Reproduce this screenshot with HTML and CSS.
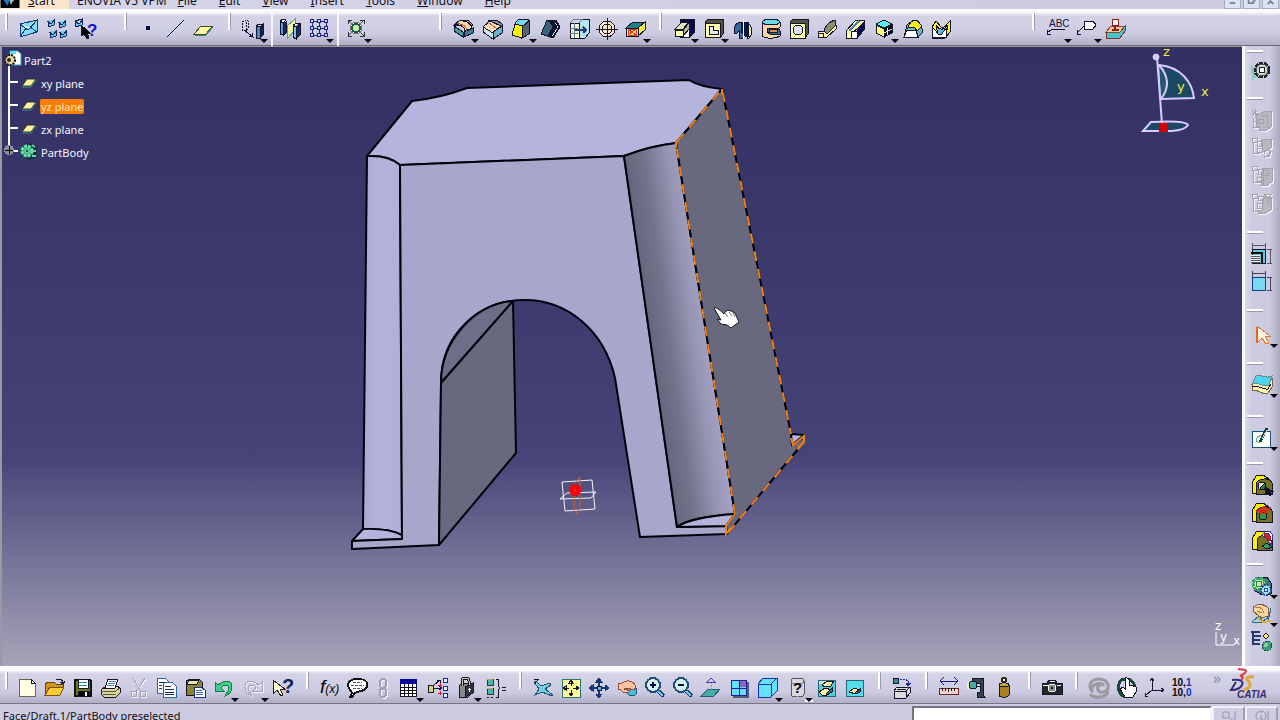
FILE: index.html
```html
<!DOCTYPE html>
<html lang="en">
<head>
<meta charset="utf-8">
<title>Part2</title>
<link rel="stylesheet" href="styles.css">
</head>
<body>
<header class="menubar">
  <nav class="menus">
    <svg class="app-mark" viewBox="0 0 19 8" aria-hidden="true"><path fill="#03040c" d="M0 0h19v8H0z"/><path fill="#2676b8" d="M3 0l4 6 2-6z"/><path fill="#e89b3c" d="M9 0l1 4 4-4z"/><path fill="#7cc8ee" d="M9 0l2 5 1-5z"/></svg>
    <button class="menu start"><u>S</u>tart</button>
    <button class="menu wide">ENOVIA V5 VPM</button>
    <button class="menu"><u>F</u>ile</button>
    <button class="menu"><u>E</u>dit</button>
    <button class="menu"><u>V</u>iew</button>
    <button class="menu"><u>I</u>nsert</button>
    <button class="menu"><u>T</u>ools</button>
    <button class="menu"><u>W</u>indow</button>
    <button class="menu"><u>H</u>elp</button>
  </nav>
  <div class="window-buttons">
    <button aria-label="Minimize"><svg viewBox="0 0 16 8"><path d="M5 3h6"/></svg></button>
    <button aria-label="Restore"><svg viewBox="0 0 16 8"><path d="M5 0v3h5V0M12 0v1"/></svg></button>
    <button aria-label="Close"><svg viewBox="0 0 16 8"><path d="M5 4l3-3 3 3"/></svg></button>
  </div>
</header>

<div class="toolbar top" role="toolbar">
  <div class="group g-view">
    <button class="tool" aria-label="Send"><svg class="i" viewBox="0 0 24 24"><path fill="#7fe0f8" stroke="#1b3a78" d="M3 7l17-4v12L3 20z"/><path stroke="#1b3a78" d="M3 7l8 6 9-10M3 20l6-9M20 15l-7-5"/><path stroke="#e4fbff" d="M5 7l6 4 6-6"/></svg></button>
    <button class="tool" aria-label="Send all"><svg class="i" viewBox="0 0 24 24"><g fill="#69cdf0" stroke="#14245e"><path d="M3 5l6-2v5l-6 2zM14 6l6-2v5l-6 2zM5 16l6-2v5l-6 2zM15 16l6-2v5l-6 2z"/><path d="M2 4l4 3 4-5M13 5l4 3 4-5M4 15l4 3 4-5M14 15l4 3 4-5"/></g></svg></button>
    <button class="tool" aria-label="What is this"><svg class="i" viewBox="0 0 24 24"><path fill="#69cdf0" stroke="#14245e" d="M2 4l7-2v6l-7 2zl4 3 4-5"/><path fill="#000" d="M8 8v11l3-2 3 5 2-1-2-5h3z"/><text class="q" x="14" y="19">?</text></svg></button>
  </div>
  <div class="group g-ref">
    <button class="tool" aria-label="Point"><svg class="i" viewBox="0 0 24 24"><path fill="#050845" stroke="none" d="M10 9h4v4h-4z"/></svg></button>
    <button class="tool" aria-label="Line"><svg class="i" viewBox="0 0 24 24"><path stroke="#001040" d="M3 20L20 3"/></svg></button>
    <button class="tool" aria-label="Plane"><svg class="i" viewBox="0 0 24 24"><path fill="#fffaa0" stroke="#47471e" d="M2 17h12l7-8H9z"/><path stroke="#2a8a80" d="M3 18h11l7-8"/></svg></button>
  </div>
  <div class="group g-pattern">
    <button class="tool more" aria-label="Translate"><svg class="i" viewBox="0 0 24 24"><path stroke-dasharray="2 1" d="M1 5l3-2 3 1v8l-2 2-4-1zM5 5v9"/><path d="M4 14l7 5M8 19l4 1-1-4"/><path fill="#438ac4" d="M15 10v11h4V9z"/><path fill="#122156" d="M19 9l3-2v11l-3 3z"/><path fill="#c5eaff" d="M15 9l3-2h4l-3 3z"/></svg></button>
    <span class="rule"></span>
    <button class="tool" aria-label="Mirror"><svg class="i" viewBox="0 0 24 24"><path fill="#55a4d6" d="M2 5l3 1v12l-3-1z"/><path fill="#192c65" d="M5 6l3-1v11l-3 2z"/><path fill="#fbf7a4" stroke="#52a38e" d="M9 9l8-7v11l-8 9z"/><path fill="#79c8ec" d="M15 9l3 1v12l-3-2z"/><path fill="#192c65" d="M18 10l4-3v11l-4 4z"/><path fill="#fff" d="M2 4l3-2 3 1-3 3zM15 8l4-2 3 1-4 3z"/></svg></button>
    <button class="tool more" aria-label="Rectangular pattern"><svg class="i" viewBox="0 0 24 24"><g stroke="#23237d"><path d="M5 2v18M12 2v18M19 2v18M3 4h18M3 11h18M3 18h18"/><g fill="#aee1f0"><circle cx="5" cy="4" r="2"/><circle cx="12" cy="4" r="2"/><circle cx="19" cy="4" r="2"/><circle cx="5" cy="11" r="2"/><circle cx="12" cy="11" r="2"/><circle cx="19" cy="11" r="2"/><circle cx="5" cy="18" r="2"/><circle cx="12" cy="18" r="2"/><circle cx="19" cy="18" r="2"/></g></g></svg></button>
    <span class="rule"></span>
    <button class="tool more" aria-label="Scaling"><svg class="i" viewBox="0 0 24 24"><path stroke="#333" d="M3 3l16 16M19 3L3 19M3 7V3h4M15 3h4v4M19 15v4h-4M7 19H3v-4"/><circle cx="11" cy="11" r="6" fill="#f8f8e8" stroke="#777"/><circle cx="11" cy="11" r="4" fill="#c8f09a" stroke="#16564d" stroke-width="2"/></svg></button>
  </div>
  <div class="group g-dress">
    <button class="tool more" aria-label="Edge fillet"><svg class="i" viewBox="0 0 24 24"><path fill="#a0a1a5" d="M2 8l6-5h8l5 5-6 2z"/><path fill="#439ba5" d="M2 9l9 6v5l-9-6z"/><path fill="#f8d6ab" d="M2 8l5-4c6-1 12 2 13 7l-7 3C12 9 8 7 2 8z"/><path fill="#397f93" d="M12 15l9-4v5l-9 4z"/><path stroke="#af5c37" d="M5 7c6-1 9 3 10 7"/></svg></button>
    <button class="tool" aria-label="Chamfer"><svg class="i" viewBox="0 0 24 24"><path fill="#87898d" d="M8 3h8l5 4v5l-9 8-8-7z"/><path fill="#fadbb0" d="M2 10l7-6 11 5-8 7z"/><path fill="#6bb5cc" d="M12 15l9-6v7l-9 6z"/><path fill="#cfe5ed" d="M2 10l10 6v6L2 15z"/><path stroke="#ad633c" d="M7 5l9 7"/></svg></button>
    <button class="tool more" aria-label="Draft"><svg class="i" viewBox="0 0 24 24"><path fill="#fff200" d="M5 7l8 1-1 13-10-3z"/><path fill="#54636c" d="M13 9l6-5v13l-7 4z"/><path fill="#71ddeb" d="M5 6l4-4 10 1-6 6-8-2z"/></svg></button>
    <button class="tool" aria-label="Shell"><svg class="i" viewBox="0 0 24 24"><path fill="#33647c" d="M2 17L8 3h9l4 7-7 11z"/><path fill="#eef8fb" d="M9 4h7l4 6-6 10-3-1 5-9-3-5z"/><path fill="#091431" d="M11 5h4l3 5-6 9H9l5-9z"/></svg></button>
    <button class="tool" aria-label="Thickness"><svg class="i" viewBox="0 0 24 24"><path fill="#afe8f2" d="M12 6l4-4h6v14l-4 5h-6z"/><path fill="#f2f6d7" d="M3 6h9v15H3z"/><path stroke="#5f7d94" d="M3 6l4-4h9M12 6l4-4M7 6v15M3 11h8M3 16h8"/><path stroke="#27396e" stroke-width="2" d="M8 13h11M16 10l3 3-3 3"/></svg></button>
    <button class="tool" aria-label="Thread"><svg class="i" viewBox="0 0 24 24"><circle cx="12" cy="12" r="8" fill="#ffeccd"/><circle cx="12" cy="12" r="5"/><path d="M12 1v22M1 12h22"/></svg></button>
    <button class="tool more" aria-label="Replace face"><svg class="i" viewBox="0 0 24 24"><path fill="#17878a" d="M2 11l7-6h12l-7 6z"/><path fill="#ffec67" d="M2 11h12v8H2z"/><path fill="#f2f24a" d="M14 11l7-6v8l-7 6z"/><path stroke="#dc381c" d="M4 12h8v6H4zl8 6M12 12l-8 6"/></svg></button>
  </div>
  <div class="group g-sketch">
    <button class="tool more" aria-label="Pad"><svg class="i" viewBox="0 0 24 24"><path fill="#05084b" d="M8 2h14v14l-4 4H8z"/><path fill="#fff" d="M8 5h9v15H8z"/><path fill="#ffffac" d="M3 13h8v6H3z"/><path fill="#e6e6b5" d="M3 12l7-7h7l-6 7z"/><path fill="#b9b98d" d="M11 13l6-7v6l-6 7z"/></svg></button>
    <button class="tool more" aria-label="Pocket"><svg class="i" viewBox="0 0 24 24"><path fill="#55543d" d="M3 5l3-3h15v15l-3 4z"/><path fill="#ffffac" d="M3 6h15v14H3z"/><path fill="#e9e9e6" d="M7 9h4v4h5v4H7z"/></svg></button>
    <button class="tool" aria-label="Shaft"><svg class="i" viewBox="0 0 24 24"><path fill="#356b9b" d="M3 13c0-6 4-8 9-8v16H8v-7l-3 3-2-1z"/><path fill="#f5f0a3" d="M16 6c5 2 5 6 5 11l-3 4h-2z"/><path fill="#071346" d="M10 5h7v14h-3l-4-4z"/><path stroke="#fff" d="M12 2v20"/></svg></button>
    <button class="tool" aria-label="Groove"><svg class="i" viewBox="0 0 24 24"><path fill="#fbd6a4" d="M3 5h18v5l-2 2 2 2v5c-5 3-14 3-18 0z"/><path fill="#63ddec" d="M3 5c2-4 16-4 18 0-2 4-16 4-18 0z"/><path fill="#31739b" d="M8 11h11l2 3v3H11l-3-2z"/><path fill="#e88d57" d="M10 12h8v3h-8z"/></svg></button>
    <button class="tool" aria-label="Hole"><svg class="i" viewBox="0 0 24 24"><path fill="#55543d" d="M3 5l3-3h15v15l-3 4z"/><path fill="#ffffac" d="M3 6h15v15H3z"/><circle cx="11" cy="13" r="5" fill="#d9e1ed"/></svg></button>
    <button class="tool" aria-label="Rib"><svg class="i" viewBox="0 0 24 24"><path fill="#fbf4a0" d="M3 20v-6h6L19 4l2 4v4l-9 8z"/><path fill="#8d8f6b" d="M9 14c1-6 7-10 11-11l1 5-9 9z"/><path fill="#fbf4a0" d="M3 16h6l-1 4H3z"/></svg></button>
    <button class="tool" aria-label="Slot"><svg class="i" viewBox="0 0 24 24"><path fill="#ffffad" d="M3 14L13 3h8v3L9 16v5H3z"/><path fill="#060b4d" d="M14 13l7-8v8l-7 8z"/><path fill="#fff" d="M8 14h6v7H8z"/><path stroke="#4182b1" stroke-width="2" d="M6 14L16 4"/></svg></button>
    <button class="tool more" aria-label="Multi-section solid"><svg class="i" viewBox="0 0 24 24"><path fill="#59eeee" d="M4 7l8-4 8 4-8 4z"/><path fill="#ffff72" d="M4 8l8 4v8l-8-4z"/><path fill="#050b13" d="M12 12l8-4v8l-8 4z"/><path stroke="#eee" d="M15 11v7M12 16l8-4"/></svg></button>
    <button class="tool" aria-label="Loft"><svg class="i" viewBox="0 0 24 24"><path fill="#69bac0" d="M3 20l3-12 5-4h5l5 8v4l-4 4z"/><path fill="#fff" d="M3 20l3-7h9l2 7z"/><path fill="#fff21b" d="M7 11c1-4 4-8 7-8 4 0 4 4 7 6l-5 5c-3-6-5-3-9-3z"/></svg></button>
    <button class="tool" aria-label="Removed loft"><svg class="i" viewBox="0 0 24 24"><path fill="#ffec22" d="M3 10l4-6 5 6h3l6-6v11l-5 6H3z"/><path fill="#57bddc" d="M7 8c3 5 8 6 11 0l1 4-5 6H9z"/><path fill="#fff" d="M3 11c4 0 5 7 8 7s3-5 6-6v8H3z"/></svg></button>
  </div>
  <div class="group g-annotate">
    <button class="tool more" aria-label="Text with leader"><svg class="i" viewBox="0 0 24 24"><text class="abc" x="4" y="10">ABC</text><path d="M20 12H7l-5 4M2 13v4h4"/></svg></button>
    <button class="tool more" aria-label="Flag note"><svg class="i" viewBox="0 0 24 24"><path fill="#fff" d="M9 4h9l3 4-3 4H9z"/><path d="M9 9l-7 7M2 13v4h4"/></svg></button>
    <button class="tool" aria-label="Thermal analysis"><svg class="i" viewBox="0 0 24 24"><path fill="#45c5cf" stroke="#76381b" d="M2 15h14l5-6v5l-5 7H2z"/><path fill="#ffc997" stroke="#91422a" d="M2 15l5-6h14l-5 6z"/><path fill="#fff" stroke="#891f20" d="M8 2h6v6H8z"/><path stroke="#891f20" stroke-width="2" d="M11 8v4M8 13h7"/></svg></button>
  </div>
</div>

<main class="workspace">
  <section class="viewport" aria-label="3D view">
    <svg class="scene" viewBox="0 46 1242 620" preserveAspectRatio="xMidYMid meet" role="img" aria-label="Part model">
      <defs>
        <linearGradient id="left" x1="0" x2="1" y1="0" y2="0"><stop offset="0" stop-color="#a8a8d0"/><stop offset=".4" stop-color="#b4b3de"/><stop offset="1" stop-color="#b0afd8"/></linearGradient>
        <linearGradient id="right" gradientUnits="userSpaceOnUse" x1="650" y1="336" x2="708" y2="328"><stop offset="0" stop-color="#66677f"/><stop offset=".3" stop-color="#727289"/><stop offset=".7" stop-color="#9493b1"/><stop offset="1" stop-color="#a5a3c6"/></linearGradient>
      </defs>
      <g stroke="#02020d" stroke-width="2" stroke-linejoin="round">
        <path fill="#b4b4dc" d="M367 156L412 101Q440 98 467 88L689 80Q700 87 722 89L676 143Q650 146 624 156L400 165Q389 155 367 156z"/>
        <path fill="url(#left)" d="M367 156Q389 155 400 165L402 539V535Q389 528 363 529z"/>
        <path fill="#b4b4dc" d="M363 529Q389 528 402 535V539L352 541z"/>
        <path fill="#a8a7cb" d="M400 165L624 156 677 527 726 526 727 534 640 537 615 378C604 330 567 300 525 300C478 300 441 335 441 383L439 545 352 549V541L402 539z"/>
        <path fill="#6e6e88" d="M441 383C441 340 475 304 513 301z"/>
        <path fill="#68697f" d="M441 383L513 301 516 453 439 545z"/>
        <path fill="url(#right)" d="M624 156Q650 146 676 143L735 514Q690 517 677 527z"/>
        <path fill="#b4b4dc" d="M677 527Q692 517 735 514L726 526z"/>
        <path fill="#68697f" d="M676 143L722 89 791 434 792 445 804 437V442L727 534 726 526 735 514z"/>
        <path fill="#b4b4dc" d="M791 434L804 435 792 445z"/>
      </g>
      <path fill="none" stroke="#f08018" stroke-width="2" stroke-dasharray="10 8" d="M735 514L676 143 722 89 791 434M804 442L727 534"/>
      <path fill="none" stroke="#f08018" stroke-width="2" d="M722 94V89M676 148V143L679 140M791 438L793 445 804 436V442L798 448M735 514L726 526V534L731 528"/>
      <g fill="none" stroke="#f5f5ff"><path d="M562 482l30-2 3 29-30 2zM560 499l7-6 29-1-5 6z"/><path stroke="#c86430" d="M575 483l5-6v30l-3 7-3-4z"/></g>
      <circle cx="575" cy="490" r="6" fill="#fa0208"/><circle cx="575" cy="490" r="1" fill="#cc4b22"/>
      <path fill="#fff" stroke="#15151c" d="M714 308c2-1 5 1 10 6l1-2 3-2 3 1 4 2 4 9-8 6-4-3-6-1-4-5 4 1z"/>
      <path fill="none" stroke="#777" d="M725 313l3 4M729 312l3 4M733 313l2 4"/>
      <g stroke="#d9caff" stroke-width="2">
        <path fill="#1b4862" d="M1159 65C1181 67 1192 82 1194 98L1161 99z"/><path fill="#28556b" d="M1159 65Q1174 82 1161 99"/>
        <path fill="#1b4862" d="M1143 131L1151 122Q1186 120 1188 125 1185 130 1172 131z"/><path d="M1157 57L1162 124"/>
        <circle cx="1156" cy="57" r="3" fill="#d9caff" stroke-width="1"/>
      </g>
      <path fill="#d20007" d="M1159 123h9v9h-9z"/>
      <g class="compass"><text x="1163" y="56">z</text><text x="1177" y="91">y</text><text x="1201" y="96">x</text></g>
      <path fill="none" stroke="#fff" d="M1216 632v13h18"/>
      <g class="axes"><text x="1215" y="630">z</text><text x="1220" y="641">y</text><text x="1233" y="645">x</text></g>
    </svg>
    <ul class="tree">
      <li class="root"><svg class="part" viewBox="0 0 20 18"><path fill="#fff" stroke="#30a7bd" d="M8 1h8l3 3v11H8z"/><path fill="#62d9e8" d="M8 1h6v3H8z"/><circle cx="8" cy="10" r="5" fill="#ebd9a6" stroke="#171717" stroke-width="2" stroke-dasharray="2 1"/><circle cx="7" cy="10" r="2" fill="#292316"/></svg><span>Part2</span></li>
      <li><svg class="leaf" viewBox="0 0 20 12"><path fill="#fff09a" stroke="#2d2c32" d="M3 9h9l5-7H8z"/><path stroke="#3f8b8d" d="M3 10h9l5-7"/></svg><span>xy plane</span></li>
      <li><svg class="leaf" viewBox="0 0 20 12"><path fill="#fff09a" stroke="#2d2c32" d="M3 9h9l5-7H8z"/><path stroke="#3f8b8d" d="M3 10h9l5-7"/></svg><span class="picked">yz plane</span></li>
      <li><svg class="leaf" viewBox="0 0 20 12"><path fill="#fff09a" stroke="#2d2c32" d="M3 9h9l5-7H8z"/><path stroke="#3f8b8d" d="M3 10h9l5-7"/></svg><span>zx plane</span></li>
      <li class="last"><button class="expand" aria-label="Expand PartBody"><svg viewBox="0 0 10 10"><circle cx="5" cy="5" r="5" fill="#8c8c96"/><path stroke="#050505" stroke-width="1" d="M1 5h8M5 1v8"/></svg></button><svg class="leaf body" viewBox="0 0 20 18"><path fill="#172e3a" d="M6 2l5-1 7 3-1 12-7 2-8-4V7z"/><circle cx="8" cy="9" r="5" fill="#3aa877" stroke="#65e2aa" stroke-width="3" stroke-dasharray="3 1"/><circle cx="8" cy="9" r="2" fill="#1c5d4c" stroke="#91f5c1"/><path stroke="#6bd4ba" stroke-width="2" d="M13 3l3 2M14 9h3M13 14h4"/></svg><span>PartBody</span></li>
    </ul>
  </section>

  <div class="sidebar" role="toolbar">
    <div class="vgroup v47 near"><button class="tool" aria-label="Part design"><svg class="i" viewBox="0 0 24 24"><path fill="#8bcab8" stroke="none" d="M1 7l11 8-10 7z"/><circle cx="12" cy="12" r="7" fill="#c7d3d3" stroke="#222" stroke-width="3" stroke-dasharray="4 1"/><circle cx="12" cy="12" r="6" fill="#cbd8d6" stroke="#4c5353"/><circle cx="12" cy="12" r="3" fill="#fff" stroke="#222"/></svg></button></div>
    <div class="vgroup v134">
      <button class="tool" aria-label="Create catalog" disabled><svg class="i ghost" viewBox="0 0 24 24"><path class="face" d="M10 6l5-3h6v16l-4 3h-8v-4h-3V7z"/><path d="M2 2l6 6M8 2L2 8M5 1v8M2 5h6M3 10v9h8M3 13h5M8 11h5v4H8zM12 7h5v13"/></svg></button>
      <button class="tool" aria-label="Update catalog" disabled><svg class="i ghost" viewBox="0 0 24 24"><path class="face" d="M11 5l4-2h6v9l-8 4z"/><path d="M2 2h5v4H2zM7 5h5v5H7zM3 7v10h7M7 12h5v4H7zM14 18c3-7 8-3 6 0s-7 2-5 4M19 15v5h-5"/></svg></button>
      <button class="tool" aria-label="Open catalog" disabled><svg class="i ghost" viewBox="0 0 24 24"><path class="face" d="M12 7l4-3h6v14l-5 3h-6z"/><path d="M2 2h5v4H2zM8 5h5v5H8zM3 7v11h9M7 13h6v4H7zM12 4h5v5h4M12 11h8M13 18v3h5"/></svg></button>
      <button class="tool" aria-label="Filter catalog" disabled><svg class="i ghost" viewBox="0 0 24 24"><path class="face" d="M12 8l4-3h5v13l-5 3H8v-3h4z"/><path d="M2 2h5v4H2zM8 4h5v4H8zM3 7v12h6M7 11h5v5H7zM14 2h8l-3 4v4h-2V6z"/></svg></button>
    </div>
    <div class="vgroup v78">
      <button class="tool" aria-label="Dimension stack"><svg class="i" viewBox="0 0 24 24"><path fill="#65c8df" stroke="#151a28" d="M2 7h13v14H2z"/><path stroke="#101010" stroke-width="2" d="M1 11h11v10"/><path fill="#eee" stroke="none" d="M1 13h9v8H1z"/><path stroke="#575763" d="M1 14h9M1 16h9M1 18h9M1 20h9M2 1v6M15 1v6M2 3h13M17 7h5M17 21h5M20 7v14"/></svg></button>
      <button class="tool" aria-label="Dimension box"><svg class="i" viewBox="0 0 24 24"><path fill="#77d9f2" stroke="#183d7a" d="M2 7h13v13H2z"/><path stroke="#464658" d="M2 1v6M15 1v6M2 3h13M17 7h5M17 20h5M20 7v13"/></svg></button>
    </div>
    <div class="vgroup v53 far"><button class="tool more" aria-label="Select"><svg class="i" viewBox="0 0 24 24"><path fill="#fff6e9" stroke="#e77824" d="M7 3v17l5-5 4 6 3-1-4-7h5z"/><path stroke="#df6b13" stroke-width="2" d="M7 4v16"/></svg></button></div>
    <div class="vgroup v53"><button class="tool more" aria-label="Surface"><svg class="i" viewBox="0 0 24 24"><path fill="#fff1ac" stroke="#776347" d="M2 11l4-6c5-2 9 4 16 1v8l-4 6c-6 3-10-5-16-2z"/><path fill="#4dd5eb" stroke="#66898a" d="M2 11l4-8c5-3 9 4 16 0l-3 9c-6 3-11-4-17-1z"/><path d="M2 14c6-3 10 3 16 2l3-5"/></svg></button></div>
    <div class="vgroup v47"><button class="tool more" aria-label="Sketcher"><svg class="i" viewBox="0 0 24 24"><path fill="#fff" stroke="#184f83" d="M2 5h18v16H2z"/><path stroke="#58b489" d="M10 17c-6-1-4-8 2-7"/><path stroke="#173340" stroke-width="3" d="M10 16l7-14"/><path stroke="#b4d1cb" d="M12 13l5-9"/></svg></button></div>
    <div class="vgroup v101">
      <button class="tool" aria-label="Apply material"><svg class="i" viewBox="0 0 24 24"><path fill="#fff200" d="M2 10l4-7 7-1 6 4 3 4v10H2z"/><path fill="#777223" d="M6 12c0-6 13-9 16-2v11H6z"/><circle cx="12" cy="13" r="4" fill="#e4e1bf"/><path fill="#257e49" d="M12 17l-2-2 5-5 1 5z"/><path fill="#111" d="M15 14v8l2-2 3 3 2-2-3-3h3z"/></svg></button>
      <button class="tool" aria-label="Remove material"><svg class="i" viewBox="0 0 24 24"><path fill="#fff200" d="M2 10l4-7 7-1 6 4 3 4v10H2z"/><path fill="#777223" d="M6 12c0-6 13-9 16-2v11H6z"/><circle cx="13" cy="15" r="4" fill="#31984f"/><path fill="#df2a13" stroke="#df2a13" d="M6 11l9-6-2 5 8-4-6 7-1-3-4 4 1-4z"/></svg></button>
      <button class="tool" aria-label="Material library"><svg class="i" viewBox="0 0 24 24"><path fill="#fff200" d="M2 10l4-7 7-1 6 4 3 4v10H2z"/><path fill="#777223" d="M7 12c0-6 13-9 15-2v11H7z"/><path fill="#fff" stroke="#2538a3" d="M12 6l4-4h4l3 5-2 9-4-6z"/><path fill="#d71f25" stroke="#a02020" d="M14 5l4-1 3 4-1 4-4-3z"/><path fill="#2ca34d" d="M12 17l5-3 5 4-5 2z"/></svg></button>
    </div>
    <div class="vgroup v103">
      <button class="tool more" aria-label="Knowledge"><svg class="i" viewBox="0 0 24 24"><path fill="#3b7881" d="M6 3h11l4 6v11l-9 1-8-5V7z"/><circle cx="9" cy="10" r="6" fill="#d2e7a1" stroke="#36a765" stroke-width="3" stroke-dasharray="3 1"/><circle cx="9" cy="10" r="3" stroke="#268756"/><circle cx="16" cy="16" r="5" fill="#b2dbef" stroke="#164f9c" stroke-width="2" stroke-dasharray="2 1"/><circle cx="16" cy="16" r="2" fill="#d8f4f6" stroke="#164f9c"/></svg></button>
      <button class="tool more" aria-label="Sculpt"><svg class="i" viewBox="0 0 24 24"><path fill="#f9d69e" stroke="#835b3c" d="M3 5c5-4 12-3 15 1v8l-6 2-8-6z"/><path stroke="#b17a4c" d="M5 6c5-2 8 1 9 5M7 9l5 2"/><path fill="#99d8df" stroke="#2a6a94" d="M2 20l7-6 4 5 6-4 2-9-3 13-5 2z"/><path stroke="#e6a738" stroke-width="2" d="M8 16l5 4 8-1"/></svg></button>
      <button class="tool" aria-label="Feature tree"><svg class="i" viewBox="0 0 24 24"><path stroke="#25386d" stroke-width="2" d="M1 2h9M3 2v12h7M3 6h8M3 10h7"/><path fill="#ffe85d" d="M16 3l3 3-3 3-3-3z"/><circle cx="17" cy="16" r="5" fill="#389d70" stroke="#154f50" stroke-dasharray="2 1"/><circle cx="16" cy="15" r="2" fill="#9bcaa9" stroke="none"/></svg></button>
    </div>
  </div>
</main>

<div class="toolbar bottom" role="toolbar">
  <div class="group b-standard">
    <button class="tool" aria-label="New"><svg class="i" viewBox="0 0 24 24"><path fill="#ffffe2" stroke="#686852" d="M4 3h12l4 4v13H4z"/><path fill="#fff" d="M16 3v4h4z"/></svg></button>
    <button class="tool" aria-label="Open"><svg class="i" viewBox="0 0 24 24"><path fill="#ce9813" stroke="#66430f" d="M2 18V8l3-2h6l2 2h7v3"/><path fill="#f9cd38" stroke="#765018" d="M2 19l5-8h14l-4 8z"/><path d="M13 4c4-2 6-1 7 3M17 6l3 2 2-3"/></svg></button>
    <button class="tool" aria-label="Save"><svg class="i" viewBox="0 0 24 24"><path fill="#6e7918" stroke="#10130a" stroke-width="2" d="M4 4h15l1 1v15H4z"/><path fill="#fff" d="M7 3h10v9H7z"/><path stroke="#277fa6" d="M8 6h8M8 9h8"/><path fill="#080808" d="M7 15h11v5H7z"/><path fill="#fff" stroke="none" d="M14 16h2v4h-2z"/></svg></button>
    <button class="tool" aria-label="Print"><svg class="i" viewBox="0 0 24 24"><path fill="#d8d7a4" d="M2 14l4-3 12-1 3 2v5l-4 4H5l-3-3z"/><path fill="#fff" d="M6 12l3-9h10l-3 9z"/><path stroke="#4787b2" d="M10 5h7M9 7h7M8 9h7"/><path stroke="#58582c" d="M2 15h15l4-3M4 18h13"/></svg></button>
    <button class="tool" aria-label="Cut" disabled><svg class="i ghost" viewBox="0 0 24 24"><path d="M6 2l8 14M18 2L9 16"/><circle cx="7" cy="18" r="3"/><circle cx="16" cy="18" r="3"/></svg></button>
    <button class="tool" aria-label="Copy"><svg class="i" viewBox="0 0 24 24"><g fill="#fff" stroke="#2868a9"><path d="M2 2h8l3 3v12H2z"/><path d="M8 6h9l4 4v11H8z"/><path stroke="#142e74" d="M4 6h6M4 9h3M4 12h3M10 10h6M10 13h9M10 16h9M10 18h9"/></g></svg></button>
    <button class="tool" aria-label="Paste"><svg class="i" viewBox="0 0 24 24"><path fill="#8c8333" d="M3 5l4-2h9l3 3v13H3z"/><path fill="#ece7a6" d="M6 4h10l-2 4H4z"/><path fill="#fff" stroke="#15348b" d="M11 11h7l4 3v7H11z"/><path stroke="#3168a0" d="M13 14h6M13 16h7M13 18h7"/></svg></button>
    <button class="tool more" aria-label="Undo"><svg class="i" viewBox="0 0 24 24"><path fill="#40ce88" stroke="#187a4b" d="M3 6v9h9l-3-3c4-5 8-3 8 1l-4 7c9-3 9-14 2-15-4 0-6 2-9 4z"/></svg></button>
    <button class="tool more" aria-label="Redo" disabled><svg class="i ghost" viewBox="0 0 24 24"><path d="M20 6v9h-9l3-3c-4-5-8-3-8 1l4 7C1 17 1 6 8 5c4 0 6 2 9 4z"/></svg></button>
    <button class="tool" aria-label="Help"><svg class="i" viewBox="0 0 24 24"><path fill="#fffed2" stroke="#222" d="M2 4v14l4-4 4 6 2-1-3-6h5z"/><text class="q dark" x="11" y="17">?</text></svg></button>
  </div>
  <div class="group b-knowledge">
    <button class="tool" aria-label="Formula"><svg class="i" viewBox="0 0 24 24"><text class="fx" x="2" y="17">f<tspan class="sub">(x)</tspan></text></svg></button>
    <button class="tool" aria-label="Comment"><svg class="i" viewBox="0 0 24 24"><path fill="#fff" stroke="#111" stroke-width="2" d="M5 15C-1 9 3 3 11 3c12-1 14 10 4 12-4 1-6 1-9 6H4l2-4z"/><path stroke="#555" stroke-dasharray="3 1" d="M7 6h9M5 9h13M7 12h9"/></svg></button>
    <button class="tool slim" aria-label="Link" disabled><svg class="i ghost" viewBox="0 0 24 24"><path stroke-width="2" d="M9 9V6c0-4 6-4 6 0v3c0 4-6 4-6 0zM9 15c0-3 6-3 6 0v3c0 4-6 4-6 0z"/></svg></button>
    <button class="tool more" aria-label="Design table"><svg class="i" viewBox="0 0 24 24"><path fill="#fff" d="M3 4h16v16H3z"/><path fill="#080797" stroke="none" d="M3 3h17v5H3z"/><path stroke="#111" d="M3 11h16M3 14h16M3 17h16M7 8v12M11 8v12M15 8v12"/></svg></button>
    <button class="tool" aria-label="Relations"><svg class="i" viewBox="0 0 24 24"><path fill="#d7cf69" d="M2 9h5v7H2z"/><path d="M8 12h8M8 9l6-5M11 4h3v3M13 10l3 2-3 2"/><g fill="#e0f5ff" stroke="#1b22b4"><path d="M17 2h4v4h-4zM17 10h4v4h-4zM17 17h4v4h-4z"/></g><path stroke="#cd2333" d="M14 7v4M12 9h4M14 15v4M12 17h4"/></svg></button>
    <button class="tool more" aria-label="Lock"><svg class="i" viewBox="0 0 24 24"><path fill="#85888b" d="M4 10l4-3h10v9l-5 5H4z"/><path fill="#303337" d="M10 11l8-4v10l-8 4z"/><path stroke="#151515" stroke-width="3" d="M7 10V5c0-4 7-4 7 0v4"/><path stroke="#c9c9c5" d="M7 10V5c0-4 7-4 7 0v4"/><path stroke="#faf9e2" d="M14 12v4M13 13h3"/></svg></button>
    <button class="tool" aria-label="Equivalent dimensions"><svg class="i" viewBox="0 0 24 24"><path fill="#49b5b0" stroke="#34361e" d="M3 3h6v6H3zM3 12h6v6H3z"/><path stroke="#c2a52c" d="M3 3h6M3 12h6"/><path d="M3 21h2M7 21h2M12 3h2v7l2 2-2 2v7h-2M18 11h4M18 14h4"/></svg></button>
  </div>
  <div class="group b-camera">
    <button class="tool" aria-label="Fly mode"><svg class="i" viewBox="0 0 24 24"><path fill="#73d1e5" stroke="#255071" d="M5 5l5 5 9-3 1 2-6 4 8 6-1 1-10-4-7 3 4-6-5-7z"/><path d="M3 4l5-1M3 8l5-5"/></svg></button>
    <button class="tool" aria-label="Fit all"><svg class="i" viewBox="0 0 24 24"><path fill="#ffff95" stroke="#2a7775" d="M3 3h18v18H3z"/><path d="M12 4v6M12 14v6M4 12h6M14 12h6M10 7l2-3 2 3zM10 17l2 3 2-3zM7 10l-3 2 3 2zM17 10l3 2-3 2z"/></svg></button>
    <button class="tool" aria-label="Pan"><svg class="i" viewBox="0 0 24 24"><path stroke="#163877" stroke-width="2" d="M12 3v18M3 12h18"/><path fill="#163877" stroke="#163877" d="M9 6l3-4 3 4zM9 18l3 4 3-4zM6 9l-4 3 4 3zM18 9l4 3-4 3z"/><path fill="#66bbdd" d="M10 10h4v4h-4z"/></svg></button>
    <button class="tool" aria-label="Rotate"><svg class="i" viewBox="0 0 24 24"><circle cx="17" cy="15" r="5" fill="#45bdde" stroke="#245380"/><path fill="#f9c4a1" stroke="#a04c34" d="M3 7h4c5-4 12-2 14 4l-2 3-7-2-3 1 6 2-2 2-5-1-3-3H3z"/></svg></button>
    <button class="tool" aria-label="Zoom in"><svg class="i" viewBox="0 0 24 24"><path stroke="#21396a" stroke-width="4" d="M14 14l7 6"/><path stroke="#6ec6e7" stroke-width="2" d="M15 15l5 5"/><circle cx="10" cy="9" r="7" fill="#d5f2ef" stroke="#1f4f78" stroke-width="2"/><path stroke="#050545" stroke-width="2" d="M7 9h6M10 6v6"/></svg></button>
    <button class="tool" aria-label="Zoom out"><svg class="i" viewBox="0 0 24 24"><path stroke="#21396a" stroke-width="4" d="M14 14l7 6"/><path stroke="#6ec6e7" stroke-width="2" d="M15 15l5 5"/><circle cx="10" cy="9" r="7" fill="#d5f2ef" stroke="#1f4f78" stroke-width="2"/><path stroke="#050545" stroke-width="2" d="M7 9h6"/></svg></button>
    <button class="tool" aria-label="Normal view"><svg class="i" viewBox="0 0 24 24"><path fill="#47a9aa" stroke="#235d71" d="M2 20l7-7h12l-6 7z"/><path stroke="#c98834" stroke-dasharray="2 1" d="M12 17V6"/><path stroke="#4b37ab" d="M8 6l4-4 4 4z"/></svg></button>
    <button class="tool" aria-label="Multi-view"><svg class="i" viewBox="0 0 24 24"><path fill="#555a76" stroke="none" d="M6 6h16v16H6z"/><path fill="#62dffa" stroke="#201fa4" d="M4 4h15v15H4zM12 4v15M4 12h15"/><path fill="#9764bd" stroke="none" d="M13 5h6v6h-6z"/></svg></button>
    <button class="tool more" aria-label="Isometric view"><svg class="i" viewBox="0 0 24 24"><path fill="#63e3fa" stroke="#2529ad" d="M2 8l5-6h14v13l-6 6H2z"/><path stroke="#2529ad" d="M2 8h13l6-6M15 8v13"/></svg></button>
    <button class="tool more lit" aria-label="View mode"><svg class="i" viewBox="0 0 24 24"><path fill="#d8d8df" stroke="#555" d="M5 5c0-4 13-4 13 0v13c0 4-13 4-13 0z"/><path stroke="#777" d="M5 5c0 4 13 4 13 0"/><text class="q black" x="7" y="17">?</text></svg></button>
    <button class="tool" aria-label="Hide and show"><svg class="i" viewBox="0 0 24 24"><path fill="#54ccda" stroke="#24657a" d="M3 4h17v16H3z"/><path fill="#dde6d5" stroke="none" d="M4 5h15v3H4z"/><path fill="#fff3a1" d="M4 16l6-4 7 2-5 5H7zM7 9l5-4h7l-3 5-6 1z"/><path fill="#306c70" d="M11 18l6-6v4l-5 3z"/></svg></button>
    <button class="tool" aria-label="Swap visible space"><svg class="i" viewBox="0 0 24 24"><path fill="#56ddea" stroke="#24657a" d="M3 4h17v16H3z"/><path fill="#fff3a1" d="M6 16l5-4 6 2-4 4z"/><path fill="#306c70" d="M12 17l5-4v3l-4 2z"/></svg></button>
  </div>
  <div class="group b-catalog"><button class="tool" aria-label="Catalog"><svg class="i" viewBox="0 0 24 24"><circle cx="6" cy="5" r="3" fill="#378b91"/><path stroke="#262693" stroke-dasharray="2 1" d="M10 3h5l3 2v3"/><path fill="#262693" stroke="#262693" d="M16 7l2 3 3-3z"/><path fill="#ddd" d="M4 15l3-4h13v6l-4 5H4z"/><path d="M4 15h12v6M7 13h9M16 15l4-4"/></svg></button></div>
  <div class="group b-measure">
    <button class="tool" aria-label="Measure between"><svg class="i" viewBox="0 0 24 24"><path stroke="#171783" d="M3 5h18M7 1L3 5l4 4M17 1l4 4-4 4"/><path fill="#f8d5c8" stroke="#6b2631" d="M2 12h19v6H2z"/><path d="M5 12v3M8 12v3M11 12v4M14 12v3M17 12v3"/></svg></button>
    <button class="tool" aria-label="Measure item"><svg class="i" viewBox="0 0 24 24"><path fill="#34444b" stroke="#101c22" d="M7 2h11v17l2 2h-8v-4l3-1V7H7z"/><circle cx="8" cy="9" r="4" fill="#48a8a4"/><path stroke="#fff2a0" stroke-width="2" d="M3 6v7"/><path d="M12 10h4"/></svg></button>
    <button class="tool" aria-label="Measure inertia"><svg class="i" viewBox="0 0 24 24"><circle cx="11" cy="4" r="2" fill="#eee" stroke="#332a11" stroke-width="2"/><path fill="#aa8221" d="M6 9c1-3 9-3 10 0v10c-1 3-9 3-10 0z"/><path fill="#c9a841" d="M6 9c1-3 9-3 10 0-1 2-9 2-10 0z"/></svg></button>
  </div>
  <div class="group b-photo"><button class="tool" aria-label="Capture"><svg class="i" viewBox="0 0 24 24"><path fill="#25282b" d="M2 7h5l2-3h6l2 3h5v11H2z"/><path fill="#f7f4de" d="M9 4h6v2H9z"/><circle cx="12" cy="12" r="4" fill="#858a8b" stroke="#f4f4e9"/><circle cx="12" cy="12" r="1" fill="#fff"/><path stroke="#fff" d="M3 9h5M17 9h4"/></svg></button></div>
  <div class="group b-update">
    <button class="tool" aria-label="Update all" disabled><svg class="i smooth" viewBox="0 0 24 24"><g stroke="#999ba0" stroke-width="3"><path d="M6 16C-1 9 5 3 12 3s10 5 9 9-8 6-10 2 1-5 3-4"/><path d="M3 18c4 5 17 4 18-3M5 13c0-5 9-8 12-3"/></g></svg></button>
    <button class="tool" aria-label="Manual update"><svg class="i" viewBox="0 0 24 24"><path stroke="#1c473f" stroke-width="3" d="M20 10C17 1 6 1 4 8s2 12 7 13"/><path fill="#fff" stroke="#171717" d="M8 11l2 2V3c1-2 4-1 4 1v6l2-1 5 2v5l-3 5h-8l-5-8z"/></svg></button>
    <button class="tool" aria-label="Axis system"><svg class="i" viewBox="0 0 24 24"><path d="M9 14V3M9 14h12M9 14l-7 6M7 5l2-3 2 3M18 12l3 2-3 2M2 17v3h3"/></svg></button>
    <button class="tool" aria-label="Mean dimensions"><svg class="i" viewBox="0 0 24 24"><text class="num" x="1" y="10">10,<tspan class="blue">1</tspan></text><text class="num" x="1" y="20">10,<tspan class="blue">0</tspan></text></svg></button>
  </div>
  <div class="brand"><span class="overflow-mark">»</span>
    <svg class="logo" viewBox="0 0 42 32" role="img" aria-label="DS CATIA"><path fill="none" stroke="#d83b43" stroke-width="2" d="M9 1c4 1 8 0 8 2s-4 4-6 5c4 0 3 2 1 4"/><path fill="none" stroke="#3a2b78" stroke-width="2" d="M3 12c8-1 12 1 10 5s-7 5-11 5l5-8"/><path fill="none" stroke="#e8a52f" stroke-width="3" d="M25 9c-6-1-9 1-6 4s4 6-4 9"/><text x="8" y="30">CATIA</text></svg>
  </div>
</div>

<footer class="statusbar">
  <output class="message">Face/Draft.1/PartBody preselected</output>
  <input class="command" type="text" aria-label="Power input">
  <button class="status-button" aria-label="Command list"><svg viewBox="0 0 18 12"><path d="M3 2h6v6H3zM10 9h3M15 1v9"/></svg></button>
  <button class="status-button" aria-label="Information"><svg viewBox="0 0 18 12"><circle cx="8" cy="6" r="5"/><path d="M8 5v4M8 2v1M7 9h3M15 1v9"/></svg></button>
</footer>
</body>
</html>
```
FILE: styles.css
```css
* { box-sizing: border-box; }

html, body { height: 100%; }

body {
  margin: 0;
  display: flex;
  flex-direction: column;
  overflow: hidden;
  background: #cdcce3;
  color: #101018;
  font-family: "Noto Sans", "Open Sans", sans-serif;
  font-size: 12px;
}

button {
  font: inherit;
  color: inherit;
  margin: 0;
  padding: 0;
  border: 0;
  background: none;
}

.menubar {
  display: flex;
  justify-content: space-between;
  height: 9px;
  overflow: hidden;
  background: linear-gradient(90deg, #d5d4e8, #cbcae1);
}
.menus { display: flex; align-items: flex-end; }
.app-mark { width: 20px; height: 9px; padding-bottom: 1px; background: #fbe5c8; }
.menu { line-height: 17px; padding: 0 11px; white-space: nowrap; }
.menu.start { padding: 0 14px 0 8px; background: #fbe5c8; }
.menu.wide { padding: 0 0 0 8px; }
.window-buttons { display: flex; gap: 2px; padding-right: 1px; }
.window-buttons button {
  width: 17px;
  border: 1px solid #a4adc5;
  border-top: 0;
  background: #dce4f1;
}
.window-buttons svg { display: block; width: 15px; height: 8px; fill: none; stroke: #75839b; stroke-width: 2; }

/* Toolbars */
.toolbar {
  display: flex;
  padding-left: 5px;
  background: linear-gradient(#fbfbff 0 3px, #d4d3e6 7px, #cccbe2 70%, #b4b3cb 94%);
}
.top { padding-top: 6px; padding-bottom: 2px; border-bottom: 1px solid #686874; }
.bottom { padding-top: 7px; padding-bottom: 1px; border-bottom: 1px solid #75757f; border-top: 1px solid #fff; }
.group {
  position: relative;
  display: flex;
  flex-basis: 0;
  min-width: max-content;
}
.group::before {
  content: "";
  width: 0;
  height: 17px;
  position: absolute;
  left: 0;
  top: -2px;
  border-left: 2px solid #fff;
  border-right: 1px solid #9998ad;
}
.group .tool:first-child { margin-left: 10px; }
.group.b-standard .tool:first-child { margin-left: 8px; }
.g-view { flex-grow: 119; }
.g-ref { flex-grow: 104; }
.g-pattern { flex-grow: 211; }
.g-dress { flex-grow: 220; }
.g-sketch { flex-grow: 373; }
.g-annotate { flex-grow: 248; }
.b-standard { flex-grow: 301; }
.b-knowledge { flex-grow: 213; }
.b-camera { flex-grow: 359; }
.b-catalog { flex-grow: 47; }
.b-measure { flex-grow: 103; }
.b-photo { flex-grow: 47; }
.b-update { flex-grow: 138; }

.tool {
  position: relative;
  display: flex;
  justify-content: center;
  align-items: center;
  flex: none;
  width: 28px;
  height: 28px;
}
.tool.more { width: 30px; }
.tool.slim { width: 22px; }
.tool.more::after {
  content: "";
  position: absolute;
  right: 0;
  bottom: 0;
  border: 4px solid transparent;
  border-top-color: #050509;
  border-bottom: 0;
}
.tool.lit::after { background: #fff; }
.rule { width: 2px; margin: -3px 3px; background: #f7f7ff; flex: none; }

.i { width: 24px; height: 24px; flex: none; fill: none; stroke: #14142c; stroke-width: 1; shape-rendering: crispEdges; }
.i.smooth { shape-rendering: auto; }
.ghost { stroke: #a2a2af; filter: drop-shadow(1px 1px #f4f4ff); }
.ghost .face { fill: #b8b8c1; }
.i text { stroke: none; fill: #131344; }
.i .q { font: bold 17px "Liberation Sans", sans-serif; fill: #1717c5; }
.i .q.dark { font-size: 20px; fill: #132361; }
.i .q.black { font-size: 15px; fill: #080808; }
.i .abc { font: 10px "Liberation Sans", sans-serif; }
.i .fx { font: italic 19px "Liberation Sans", sans-serif; fill: #050505; }
.i .sub { font-size: 12px; }
.i .num { font: bold 10px "Liberation Sans", sans-serif; fill: #050505; }
.i .blue { fill: #1531b6; }

/* 3D view */
.workspace { display: flex; flex: 1; min-height: 0; }
.viewport {
  position: relative;
  flex: 1;
  min-width: 0;
  border-left: 2px solid #9998a5;
  border-top: 1px solid #9b9b9a;
  background: linear-gradient(#333163, #3c396c 35%, #434173 58%, #464478 66%, #6d6b91 80%, #a6a4b9);
}
.scene { position: absolute; inset: -1px 0 0 -2px; width: calc(100% + 2px); height: calc(100% + 1px); }
.compass { font: 13px "DejaVu Sans", sans-serif; fill: #f0eb48; }
.axes { font: 12px "DejaVu Sans", sans-serif; fill: #fff; }

/* Specification tree */
.tree {
  position: relative;
  width: max-content;
  margin: 0;
  padding: 2px 0 0;
  list-style: none;
  color: #f4f4ff;
  font-size: 11px;
  line-height: 15px;
}
.tree li { position: relative; display: flex; align-items: center; height: 23px; padding-left: 17px; }
.tree li::before {
  content: "";
  position: absolute;
  left: 6px;
  top: 0;
  width: 10px;
  height: 9px;
  border-bottom: 2px solid #fff;
}
.tree li::after {
  content: "";
  position: absolute;
  left: 6px;
  top: 0;
  width: 2px;
  height: 100%;
  background: #fff;
}
.tree .root { padding-left: 0; }
.tree .root::before { display: none; }
.tree .root::after { top: 17px; height: 6px; }
.tree .last::after { height: 11px; }
.tree span { padding: 0 1px; }
.tree .picked { background: #fa7d05; border-radius: 2px; color: #ffe8bd; }
.part { width: 20px; height: 18px; margin-right: 1px; margin-bottom: 4px; }
.leaf { width: 20px; height: 12px; margin-right: 1px; margin-bottom: 2px; fill: none; }
.leaf.body { height: 18px; margin-bottom: 4px; }
.expand { position: absolute; left: 2px; top: 4px; z-index: 1; width: 10px; height: 10px; }
.expand svg { display: block; shape-rendering: crispEdges; }

/* Vertical toolbar */
.sidebar {
  display: flex;
  flex-direction: column;
  width: 38px;
  padding-top: 4px;
  border-left: 3px solid #fcfcff;
  background: linear-gradient(90deg, #dcdbea, #cccbe2 20%, #cccbe2 70%, #aaa9bd);
}
.vgroup {
  position: relative;
  display: flex;
  flex-direction: column;
  align-items: flex-start;
  flex-basis: 0;
  padding-left: 3px;
}
.vgroup::before {
  content: "";
  position: absolute;
  left: 2px;
  top: 0;
  width: 16px;
  height: 0;
  border-top: 2px solid #fff;
  border-bottom: 1px solid #9998ad;
}
.vgroup .tool:first-child { margin-top: 9px; }
.vgroup.near .tool:first-child { margin-top: 6px; }
.vgroup.far .tool:first-child { margin-top: 12px; }
.vgroup .tool.more { width: 28px; }
.vgroup .tool.more::after { right: -2px; bottom: 1px; }
.v47 { flex-grow: 47; }
.v53 { flex-grow: 53; }
.v78 { flex-grow: 78; }
.v101 { flex-grow: 101; }
.v103 { flex-grow: 103; }
.v134 { flex-grow: 134; }

.brand { display: flex; flex-grow: 67; flex-basis: 0; min-width: max-content; gap: 8px; margin-top: -6px; margin-bottom: -2px; }
.overflow-mark { color: #8d8da3; font-size: 16px; line-height: 20px; }
.logo { width: 42px; height: 32px; }
.logo text { font: italic bold 10px "Liberation Sans", sans-serif; fill: #392b72; }

/* Status bar */
.statusbar {
  display: flex;
  align-items: flex-start;
  height: 16px;
  overflow: hidden;
  padding: 2px 2px 0 3px;
}
.message { flex: 910; font-size: 11px; line-height: 20px; white-space: nowrap; }
.command { flex: 296; min-width: 0; height: 20px; padding: 0; border: 2px solid #73737e; border-right-color: #f5f5ff; background: #fff; font: inherit; }
.status-button { width: 33px; height: 20px; border: 2px outset #f1f1fb; }
.status-button svg { display: block; width: 18px; height: 12px; margin: 2px auto; fill: none; stroke: #9494a5; }
```
